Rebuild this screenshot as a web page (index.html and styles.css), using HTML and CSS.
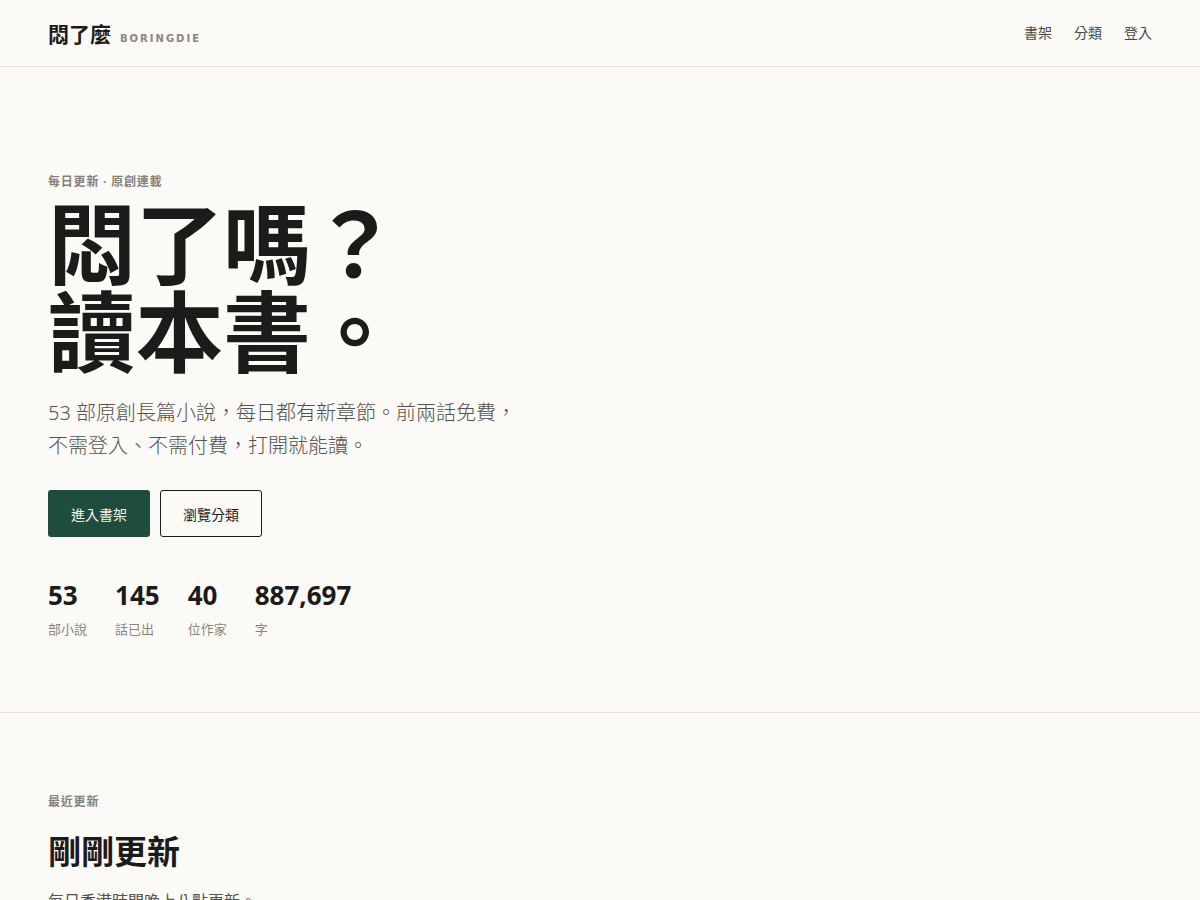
FILE: index.html
```html
<!DOCTYPE html>
<html lang="zh-Hant">
<head>
<meta charset="utf-8">
<title>悶了麼 BoringDie</title>
<link rel="stylesheet" href="styles.css">
</head>
<body>
<header class="site-header">
  <a class="brand" href="#">
    <span class="brand-name">悶了麼</span>
    <span class="brand-en">BORINGDIE</span>
  </a>
  <nav class="nav">
    <a href="#">書架</a>
    <a href="#">分類</a>
    <a href="#">登入</a>
  </nav>
</header>

<section class="hero">
  <p class="eyebrow">每日更新 · 原創連載</p>
  <h1 class="hero-title"><span class="title-line">悶了嗎？</span><span class="title-line">讀本書。</span></h1>
  <p class="hero-lead">53 部原創長篇小說，每日都有新章節。前兩話免費，<br>不需登入、不需付費，打開就能讀。</p>
  <div class="actions">
    <a class="btn btn-primary" href="#">進入書架</a>
    <a class="btn btn-outline" href="#">瀏覽分類</a>
  </div>
  <div class="stats">
    <div class="stat"><span class="stat-num">53</span><span class="stat-label">部小說</span></div>
    <div class="stat"><span class="stat-num">145</span><span class="stat-label">話已出</span></div>
    <div class="stat"><span class="stat-num">40</span><span class="stat-label">位作家</span></div>
    <div class="stat"><span class="stat-num">887,697</span><span class="stat-label">字</span></div>
  </div>
</section>

<section class="recent">
  <p class="eyebrow">最近更新</p>
  <h2 class="section-title">剛剛更新</h2>
  <p class="section-lead">每日香港時間晚上八點更新。</p>
</section>
</body>
</html>
```

FILE: styles.css
```css
* { box-sizing: border-box; }
html, body { margin: 0; padding: 0; }
body {
  background: #fbfaf7;
  color: #1c1b19;
  font-family: "Noto Sans", "Noto Sans CJK TC", sans-serif;
}
a { color: inherit; text-decoration: none; }
p { margin: 0; }

.site-header {
  height: 67px;
  display: flex;
  align-items: center;
  justify-content: space-between;
  padding: 0 48px;
  border-bottom: 1px solid #e6dfd3;
}
.brand { display: flex; align-items: baseline; gap: 9px; }
.brand-name {
  font-family: "Noto Sans CJK TC", sans-serif;
  font-weight: 700;
  font-size: 21px;
  color: #1c1b19;
}
.brand-en {
  font-family: "DejaVu Sans", sans-serif;
  font-weight: 700;
  font-size: 10px;
  letter-spacing: 2px;
  color: #8a857c;
}
.nav { display: flex; gap: 22px; margin-top: -2px; }
.nav a { font-size: 14px; color: #4a4743; }

.hero {
  padding: 105px 48px 74px;
  border-bottom: 1px solid #e6dfd3;
}
.eyebrow {
  font-family: "Noto Sans", "Noto Sans CJK TC", sans-serif;
  font-weight: 700;
  font-size: 12px;
  letter-spacing: 0.8px;
  color: #85807a;
}
.hero-title {
  margin: 5px 0 0;
  font-family: "Noto Sans CJK TC", sans-serif;
  font-weight: 700;
  font-size: 88px;
  line-height: 88px;
  letter-spacing: -0.5px;
  color: #1c1b19;
}
.title-line { display: block; }
.hero-lead {
  margin-top: 25px;
  font-size: 20px;
  line-height: 33px;
  color: #55524c;
  font-weight: 300;
}
.actions { display: flex; gap: 10px; margin-top: 28px; }
.btn {
  display: inline-flex;
  align-items: center;
  justify-content: center;
  height: 47px;
  width: 102px;
  font-size: 14px;
  border-radius: 3px;
}
.btn-primary { background: #1f4d3d; color: #f5f2ea; }
.btn-outline { border: 1px solid #1c1b19; color: #1c1b19; }

.stats { display: flex; gap: 28px; margin-top: 41px; }
.stat { display: flex; flex-direction: column; }
.stat-num { font-weight: 700; font-size: 26px; line-height: 34px; color: #1c1b19; }
.stat-label { margin-top: 8px; font-size: 13px; line-height: 18px; color: #8a857c; }

.recent { padding: 79px 48px 40px; }
.section-title {
  margin: 18px 0 0;
  font-family: "Noto Sans CJK TC", sans-serif;
  font-weight: 700;
  font-size: 33px;
  line-height: 44px;
}
.section-lead { margin-top: 16px; font-size: 16px; color: #55524c; }
```
